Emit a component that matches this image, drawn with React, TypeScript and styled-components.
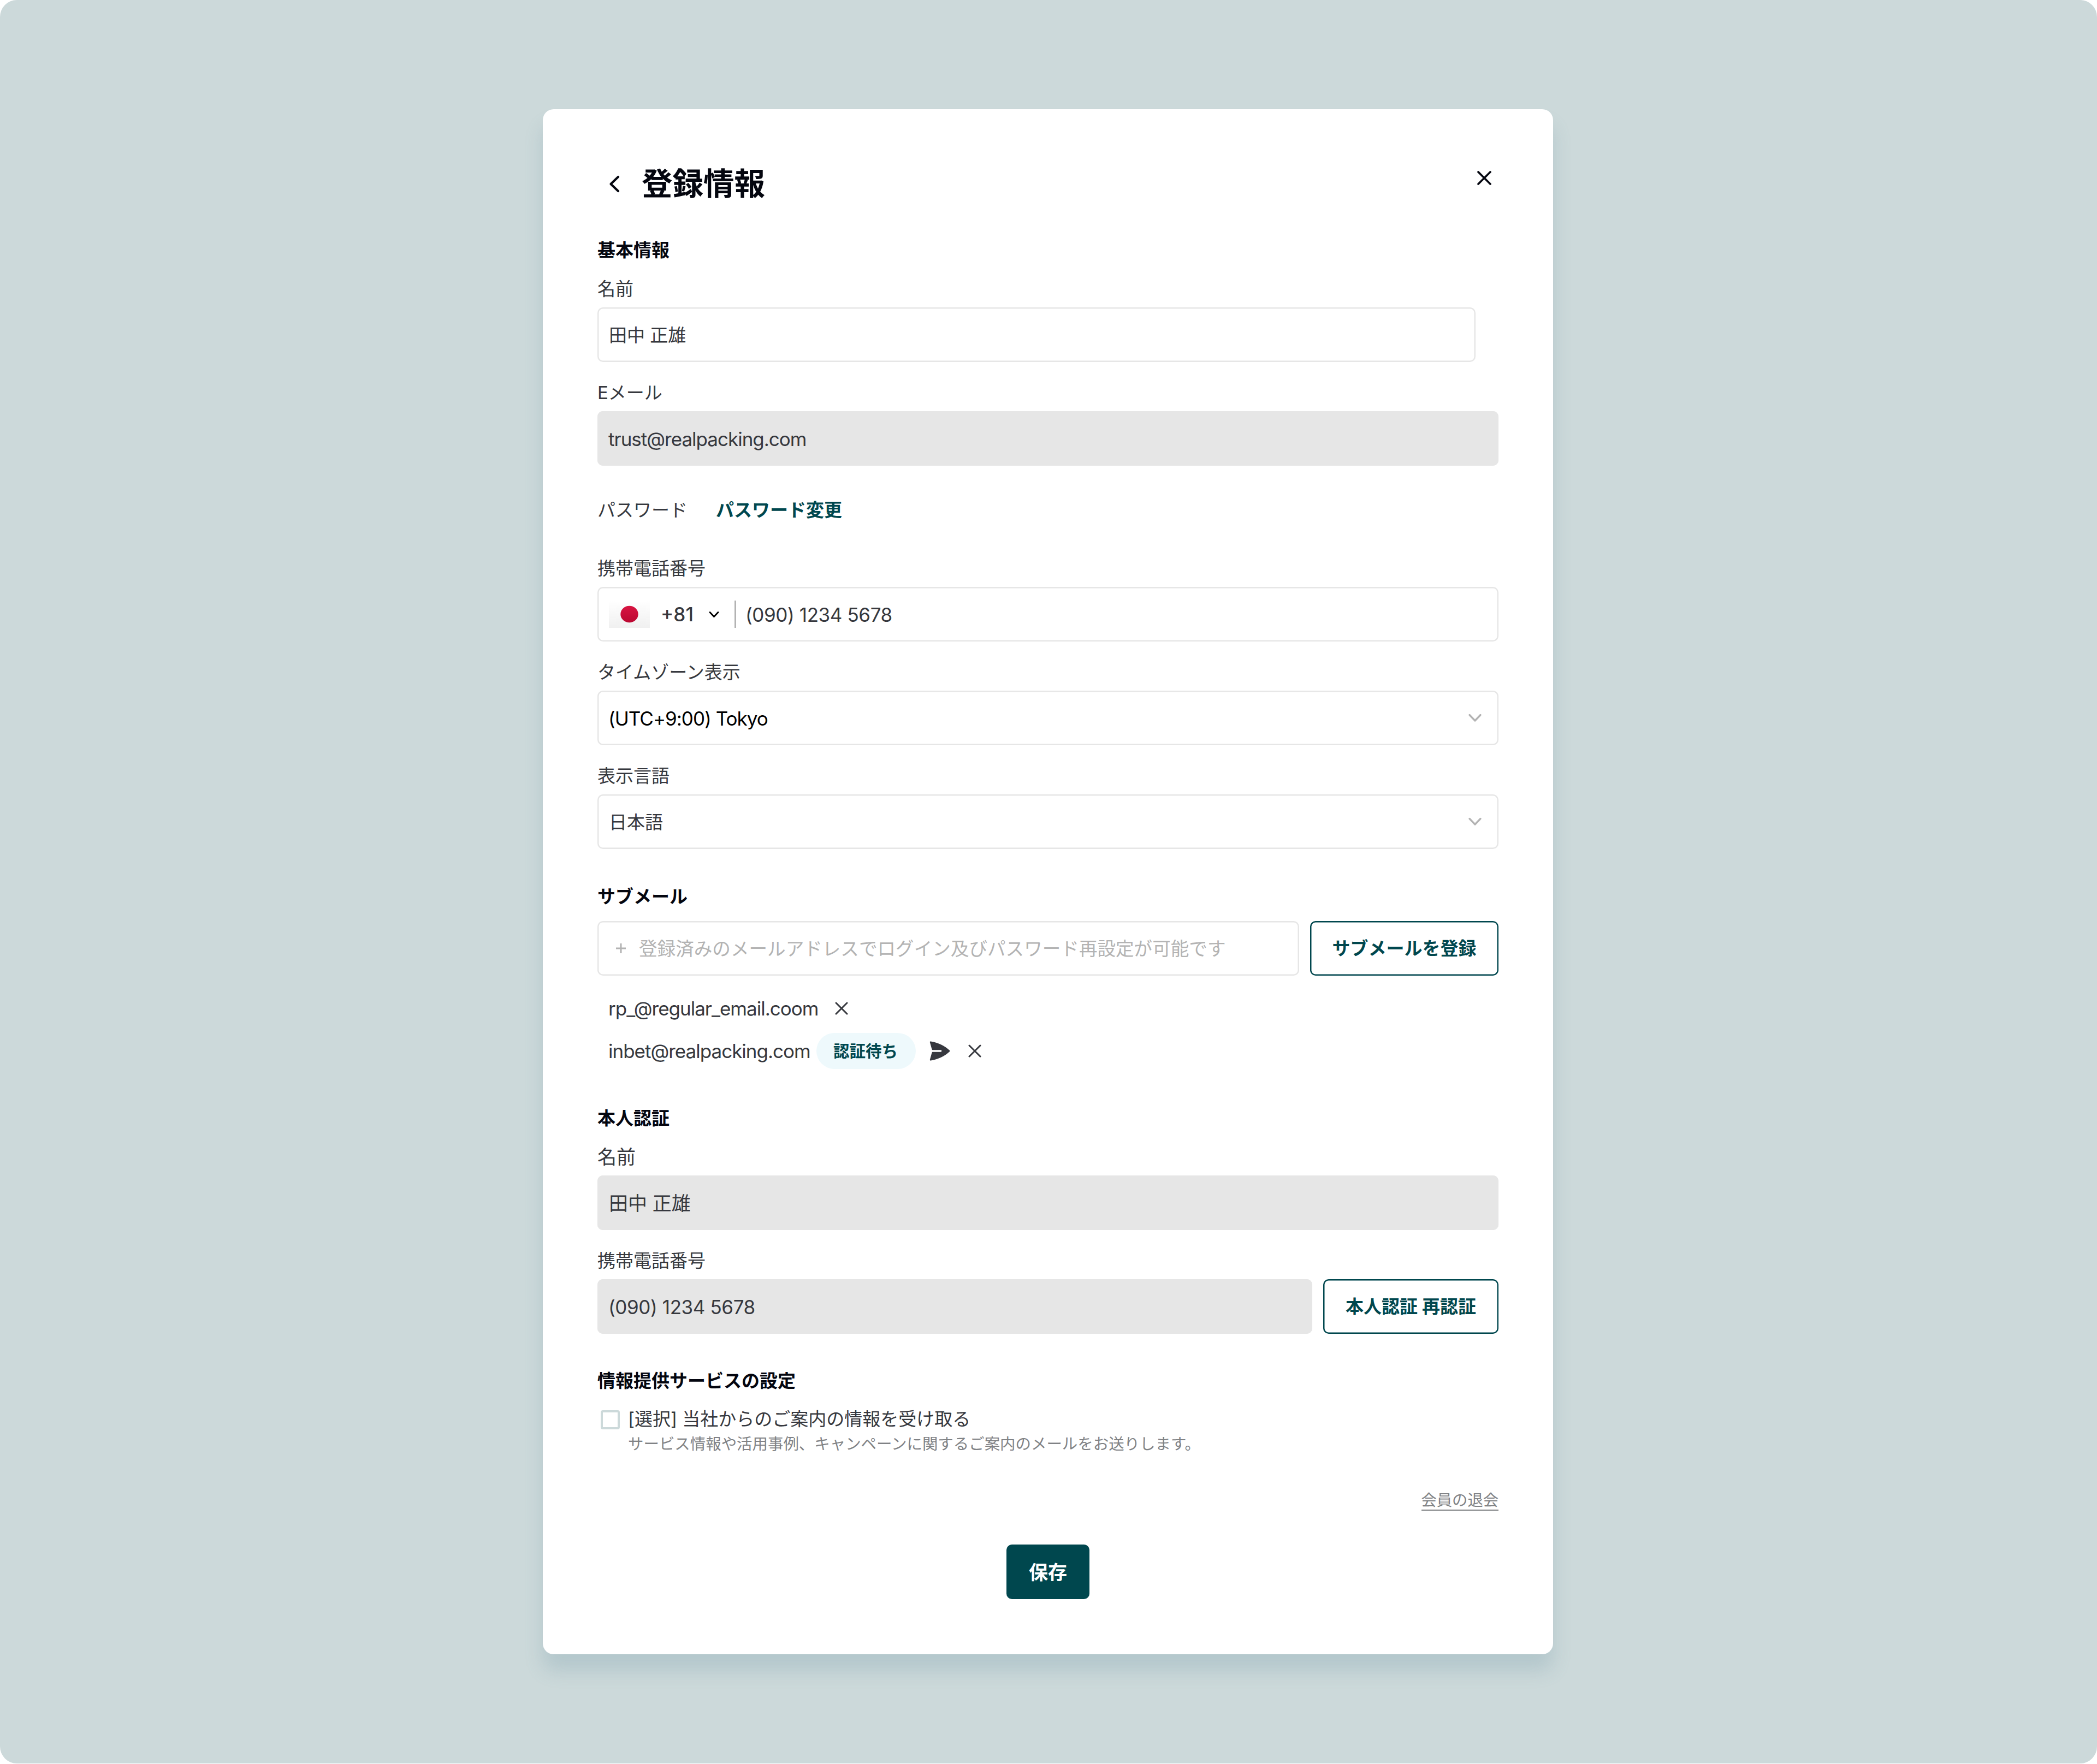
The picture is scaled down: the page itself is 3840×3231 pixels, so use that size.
import React from "react";
import styled, { createGlobalStyle, css } from "styled-components";

const GlobalStyle = createGlobalStyle`
  *, *::before, *::after { box-sizing: border-box; }
  body { margin: 0; background: #ffffff; }
  button { font: inherit; padding: 0; margin: 0; border: 0; background: none; color: inherit; }
  h1, h2, p { margin: 0; font: inherit; }
`;

const color = {
  ink: "#04060f",
  text: "#36383e",
  muted: "#808285",
  placeholder: "#b3b3b3",
  line: "#e6e6e6",
  brand: "#00474e",
};

const Stage = styled.div`
  width: 3840px;
  height: 3230px;
  border-radius: 31px;
  background: #ccd9da;
  display: flex;
  align-items: flex-start;
  justify-content: center;
  padding: 200px 0 0 0;
  font-family: Inter, "Noto Sans CJK JP", sans-serif;
  font-size: 33px;
  color: ${color.text};
  white-space: nowrap;
`;

const Card = styled.main`
  width: 1850px;
  height: 2830px;
  margin-right: 2px;
  padding: 100px;
  border-radius: 20px;
  background: #ffffff;
  box-shadow: 0 30px 34px rgba(84, 132, 148, 0.2);
  display: flex;
  flex-direction: column;
`;

const Header = styled.header`
  display: flex;
  justify-content: space-between;
  height: 73px;
  margin-bottom: 60px;
`;

const TitleGroup = styled.div`
  display: flex;
  align-items: center;
`;

const Title = styled.h1`
  margin-left: 20px;
  font-size: 56.5px;
  font-weight: 700;
  line-height: 74px;
  color: ${color.ink};
`;

const IconButton = styled.button<{ $width: number; $height: number }>`
  display: flex;
  align-items: center;
  justify-content: center;
  flex: none;
  width: ${(p) => p.$width}px;
  height: ${(p) => p.$height}px;
`;

const CloseButton = styled(IconButton)`
  margin-right: 1px;
`;

const Heading = styled.h2`
  height: 50px;
  line-height: 51px;
  margin-bottom: 20px;
  font-weight: 700;
  color: ${color.ink};
`;

const Label = styled.div<{ $size?: number }>`
  height: 50px;
  line-height: 52px;
  margin-bottom: 10px;
  font-size: ${(p) => p.$size ?? 33}px;
`;

const Field = styled.div<{ $disabled?: boolean; $width?: number; $last?: boolean }>`
  display: flex;
  align-items: center;
  flex: none;
  width: ${(p) => (p.$width ? `${p.$width}px` : "100%")};
  height: 100px;
  margin-bottom: ${(p) => (p.$last ? 0 : 30)}px;
  padding: 0 21px;
  box-shadow: inset 0 0 0 2.5px ${color.line};
  border-radius: 10px;
  background: ${(p) => (p.$disabled ? color.line : "#ffffff")};
`;

const Value = styled.span<{ $size?: number; $black?: boolean }>`
  padding-bottom: 3px;
  font-size: ${(p) => p.$size ?? 35}px;
  ${(p) => p.$black && css`color: #000000;`}
`;

const LatinValue = styled(Value)`
  margin-left: -1px;
  padding: 1px 0 0;
  letter-spacing: -1px;
`;

const PhoneValue = styled(Value)`
  margin-left: -1px;
  padding: 1px 0 0;
  letter-spacing: -0.4px;
`;

const PasswordRow = styled.div`
  display: flex;
  align-items: center;
  height: 102px;
  padding-bottom: 4px;
  margin-bottom: 30px;
  gap: 52px;
`;

const PasswordLink = styled.a`
  font-weight: 700;
  color: ${color.brand};
`;

const DialCode = styled.span`
  margin-left: 20px;
  width: 72px;
  font-size: 35px;
  font-weight: 500;
`;

const Divider = styled.span`
  width: 3px;
  height: 50px;
  margin: 0 18px 0 13px;
  background: ${color.placeholder};
`;

const SelectField = styled(Field)`
  justify-content: space-between;
  padding-right: 20px;
`;

const InlineRow = styled.div`
  display: flex;
  gap: 20px;
`;

const OutlineButton = styled.button<{ $width: number }>`
  flex: none;
  width: ${(p) => p.$width}px;
  height: 100px;
  padding-bottom: 4px;
  box-shadow: inset 0 0 0 2.5px ${color.brand};
  border-radius: 10px;
  font-weight: 700;
  color: ${color.brand};
`;

const PlusBox = styled.span`
  display: flex;
  margin-left: 12px;
`;

const Placeholder = styled.span`
  margin-left: 23px;
  padding-bottom: 3px;
  font-size: 33.6px;
  color: ${color.placeholder};
`;

const MailList = styled.div`
  display: flex;
  flex-direction: column;
  gap: 12px;
  padding: 27px 0 0 20px;
  height: 172px;
`;

const MailRow = styled.div`
  display: flex;
  align-items: center;
  flex: none;
  height: 66px;
`;

const MailAddress = styled.span<{ $width: number }>`
  width: ${(p) => p.$width}px;
  font-size: 35px;
  letter-spacing: -1px;
`;

const RemoveBox = styled.span`
  display: flex;
  align-items: center;
  justify-content: center;
  width: 50px;
  height: 50px;
`;

const SendBox = styled(RemoveBox)`
  margin-right: 14px;
`;

const Badge = styled.span`
  display: flex;
  align-items: center;
  justify-content: center;
  width: 182px;
  height: 66px;
  margin-right: 19px;
  padding: 0 2px 4px 0;
  border-radius: 33px;
  background: #eef9fc;
  font-size: 29.5px;
  font-weight: 700;
  color: ${color.brand};
`;

const Gap = styled.div<{ $size: number }>`
  flex: none;
  height: ${(p) => p.$size}px;
`;

const Consent = styled.div`
  display: flex;
  padding-left: 6px;
  gap: 15px;
`;

const Checkbox = styled.span`
  flex: none;
  width: 35px;
  height: 35px;
  margin-top: 9px;
  border: 4px solid #ccd9da;
  border-radius: 4px;
`;

const ConsentText = styled.div`
  line-height: 50px;
`;

const ConsentNote = styled.p`
  font-size: 28.45px;
  line-height: 42px;
  color: ${color.muted};
`;

const LeaveRow = styled.div`
  display: flex;
  justify-content: flex-end;
`;

const LeaveLink = styled.a`
  height: 38px;
  line-height: 38px;
  border-bottom: 2px solid ${color.muted};
  font-size: 28.3px;
  color: ${color.muted};
`;

const SaveButton = styled.button`
  align-self: center;
  flex: none;
  width: 152px;
  height: 100px;
  padding-bottom: 4px;
  border-radius: 10px;
  background: ${color.brand};
  font-size: 35px;
  font-weight: 700;
  color: #ffffff;
`;

const CloseIcon = ({ size = 26, stroke = color.ink, weight = 3.7 }) => (
  <svg width={size} height={size} viewBox={`0 0 ${size} ${size}`}>
    <path
      d={`M2 2L${size - 2} ${size - 2}M${size - 2} 2L2 ${size - 2}`}
      stroke={stroke}
      strokeWidth={weight}
      strokeLinecap="round"
    />
  </svg>
);

const BackIcon = () => (
  <svg width="20" height="32" viewBox="0 0 20 32" fill="none">
    <path d="M17 3L3.5 16L17 29" stroke={color.ink} strokeWidth="4.2" strokeLinecap="round" strokeLinejoin="round" />
  </svg>
);

const SelectArrow = () => (
  <svg width="46" height="46" viewBox="0 0 46 46" fill="none">
    <path d="M13 17.5L23 28L33 17.5" stroke={color.placeholder} strokeWidth="3.3" strokeLinecap="round" strokeLinejoin="round" />
  </svg>
);

const DialArrow = () => (
  <svg width="50" height="50" viewBox="0 0 50 50" fill="none">
    <path d="M18 21.5L25.5 29.5L33 21.5" stroke="#000000" strokeWidth="2.8" strokeLinecap="round" strokeLinejoin="round" />
  </svg>
);

const Flag = () => (
  <svg width="75" height="50" viewBox="0 0 75 50">
    <defs>
      <linearGradient id="flagField" x1="0" y1="0" x2="0" y2="1">
        <stop offset="0" stopColor="#ffffff" />
        <stop offset="1" stopColor="#f0f0f0" />
      </linearGradient>
      <linearGradient id="flagSun" x1="0" y1="0" x2="0" y2="1">
        <stop offset="0" stopColor="#d81441" />
        <stop offset="1" stopColor="#bb0831" />
      </linearGradient>
    </defs>
    <rect width="75" height="50" fill="url(#flagField)" />
    <ellipse cx="37.5" cy="25" rx="16.2" ry="15.2" fill="url(#flagSun)" />
  </svg>
);

const PlusIcon = () => (
  <svg width="20" height="20" viewBox="0 0 20 20">
    <path d="M10 1V19M1 10H19" stroke={color.placeholder} strokeWidth="3" />
  </svg>
);

const SendIcon = () => (
  <svg width="38" height="36" viewBox="0 0 38 36">
    <path
      d="M0.8 2C0.6 0.8 1.2 0.3 2.4 0.5C17 2.8 29 9.5 37 17C37.8 17.7 37.8 18.3 37 19C29 26.5 17 33.2 2.4 35.5C1.2 35.7 0.6 35.2 0.8 34L4.4 21.2C4.7 20.3 5.2 19.7 6 19.7H21C22.8 19.7 22.8 16.3 21 16.3H6C5.2 16.3 4.7 15.7 4.4 14.8Z"
      fill={color.text}
    />
  </svg>
);

export default function App() {
  return (
    <>
      <GlobalStyle />
      <Stage lang="ja">
        <Card>
          <Header>
            <TitleGroup>
              <IconButton $width={61} $height={62} aria-label="戻る"><BackIcon /></IconButton>
              <Title>登録情報</Title>
            </TitleGroup>
            <CloseButton $width={50} $height={51} aria-label="閉じる"><CloseIcon /></CloseButton>
          </Header>

          <Heading>基本情報</Heading>
          <Label>名前</Label>
          <Field $width={1608}><Value $size={33}>田中 正雄</Value></Field>
          <Label>Eメール</Label>
          <Field $disabled><LatinValue>trust@realpacking.com</LatinValue></Field>

          <PasswordRow>
            <span>パスワード</span>
            <PasswordLink>パスワード変更</PasswordLink>
          </PasswordRow>

          <Label>携帯電話番号</Label>
          <Field>
            <Flag />
            <DialCode>+81</DialCode>
            <DialArrow />
            <Divider />
            <PhoneValue>(090) 1234 5678</PhoneValue>
          </Field>
          <Label>タイムゾーン表示</Label>
          <SelectField><LatinValue $black>(UTC+9:00) Tokyo</LatinValue><SelectArrow /></SelectField>
          <Label>表示言語</Label>
          <SelectField $last><Value $size={33}>日本語</Value><SelectArrow /></SelectField>

          <Gap $size={62} />
          <Heading>サブメール</Heading>
          <InlineRow>
            <Field $width={1285} $last>
              <PlusBox><PlusIcon /></PlusBox>
              <Placeholder>登録済みのメールアドレスでログイン及びパスワード再設定が可能です</Placeholder>
            </Field>
            <OutlineButton $width={345}>サブメールを登録</OutlineButton>
          </InlineRow>
          <MailList>
            <MailRow>
              <MailAddress $width={402}>rp_@regular_email.coom</MailAddress>
              <RemoveBox><CloseIcon stroke={color.text} weight={3} size={24} /></RemoveBox>
            </MailRow>
            <MailRow>
              <MailAddress $width={381}>inbet@realpacking.com</MailAddress>
              <Badge>認証待ち</Badge>
              <SendBox><SendIcon /></SendBox>
              <RemoveBox><CloseIcon stroke={color.text} weight={3} size={24} /></RemoveBox>
            </MailRow>
          </MailList>

          <Gap $size={64} />
          <Heading>本人認証</Heading>
          <Label $size={35}>名前</Label>
          <Field $disabled><Value>田中 正雄</Value></Field>
          <Label>携帯電話番号</Label>
          <InlineRow>
            <Field $disabled $width={1309} $last><PhoneValue>(090) 1234 5678</PhoneValue></Field>
            <OutlineButton $width={321}>本人認証 再認証</OutlineButton>
          </InlineRow>

          <Gap $size={61} />
          <Heading>情報提供サービスの設定</Heading>
          <Consent>
            <Checkbox />
            <div>
              <ConsentText>[選択] 当社からのご案内の情報を受け取る</ConsentText>
              <ConsentNote>サービス情報や活用事例、キャンペーンに関するご案内のメールをお送りします。</ConsentNote>
            </div>
          </Consent>
          <Gap $size={63} />
          <LeaveRow><LeaveLink>会員の退会</LeaveLink></LeaveRow>
          <Gap $size={62} />
          <SaveButton>保存</SaveButton>
        </Card>
      </Stage>
    </>
  );
}
